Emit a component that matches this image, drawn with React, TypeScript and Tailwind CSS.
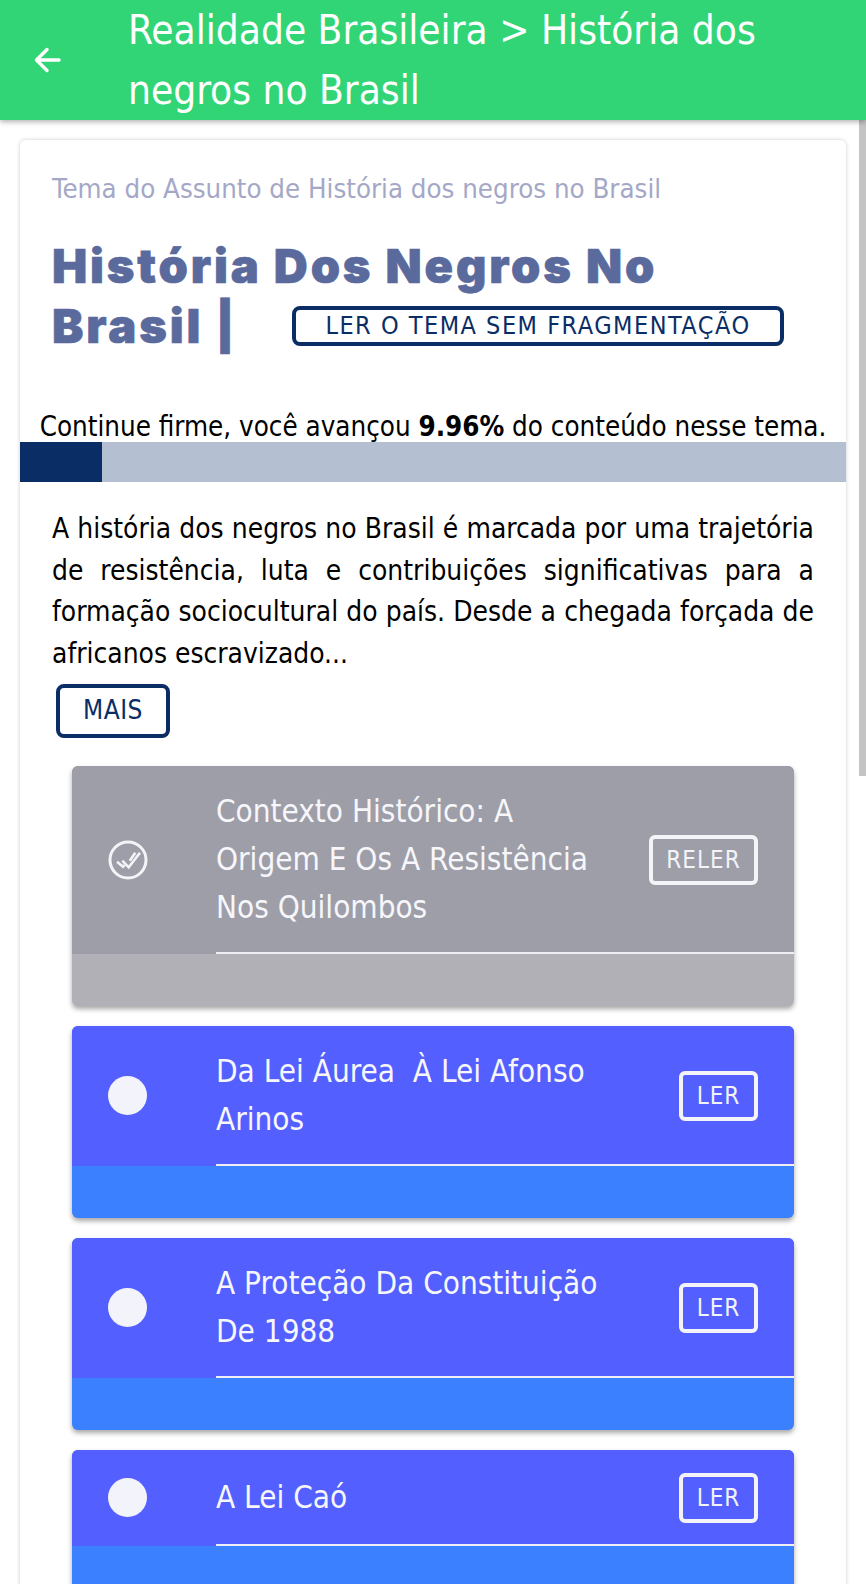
import React from "react";

const Card = ({ title, action, done, compact }: { title: React.ReactNode; action: string; done?: boolean; compact?: boolean }) => (
  <div className={`rounded-[6px] overflow-hidden shadow-[0_3px_5px_rgba(0,0,0,0.35)] ${done ? "bg-[#b0b0b6]" : "bg-[#3b80ff]"}`}>
    <div className={`flex items-center pr-[36px] ${done ? "bg-[#9e9ea8]" : "bg-[#5360ff]"} ${compact ? "h-[96px]" : "py-[21px]"}`}>
      <div className="w-[144px] shrink-0 pl-[36px]">
        {done ? (
          <svg className="block" width="40" height="40" viewBox="0 0 40 40" fill="none" stroke="#f3f3f8" strokeWidth="3">
            <circle cx="20" cy="20" r="18" />
            <path d="M9 21.7l6 5 1.5-1.6M14.3 20.7l6.4 6.6L32 12.7M21.7 20.7l5.6-8" strokeWidth="2.6" />
          </svg>
        ) : (
          <div className="w-[39px] h-[39px] rounded-full bg-[#f3f3fb]" />
        )}
      </div>
      <div className="flex-1 pb-[2px] text-[31.2px] leading-[48px] text-[#f6f6fb]">{title}</div>
      <div className={`h-[50px] flex items-center justify-center border-4 border-[#f3f3f8] rounded-[6px] text-[24px] tracking-[1px] text-[#f3f3f8] uppercase ${done ? "w-[109px]" : "w-[79px]"}`}>
        {action}
      </div>
    </div>
    <div className="h-[54px] relative">
      <div className="ml-[144px] h-[2px] bg-[#eeeef4] -mt-[2px] relative" />
    </div>
  </div>
);

export default function App() {
  return (
    <div className="h-[1584px] overflow-hidden bg-white text-black flex flex-col relative font-['DejaVu_Sans_Condensed','DejaVu_Sans',sans-serif]">
      <header className="h-[120px] shrink-0 bg-[#32d576] flex items-center text-white shadow-[0_2px_5px_rgba(0,0,0,0.3)] relative z-10">
        <div className="w-[128px] shrink-0 pl-[29px]">
          <svg width="36" height="36" viewBox="0 0 24 24" fill="none" stroke="white" strokeWidth="2.3" strokeLinecap="round" strokeLinejoin="round">
            <path d="M20 12H5M12 5l-7 7 7 7" />
          </svg>
        </div>
        <div className="text-[40.2px] leading-[60px]">Realidade Brasileira &gt; História dos<br />negros no Brasil</div>
      </header>
      <div className="absolute right-0 top-[120px] w-[7px] h-[656px] bg-[#c4c4c4]" />
      <main className="mx-[20px] mt-[20px] rounded-[6px] bg-white shadow-[0_0_4px_rgba(0,0,0,0.2)] flex-1">
        <div className="pt-[31px] px-[32px] text-[27.4px] leading-[36px] text-[#a4a8c6]">Tema do Assunto de História dos negros no Brasil</div>
        <div className="mt-[29px] px-[32px] text-[47px] leading-[60px] font-black tracking-[2.85px] text-[#5a6a9c] font-['Inter',sans-serif] [-webkit-text-stroke:0.7px_#5a6a9c]">
          <div>História Dos Negros No</div>
          <div className="flex items-center">
            <span className="w-[240px]">Brasil |</span>
            <span className="h-[40px] w-[492px] flex items-center justify-center border-4 border-[#0a2d66] rounded-[8px] text-[25px] font-normal tracking-[1.5px] text-[#0a2d66] font-['DejaVu_Sans_Condensed',sans-serif] [-webkit-text-stroke:0]">LER O TEMA SEM FRAGMENTAÇÃO</span>
          </div>
        </div>
        <div className="mt-[54px] text-center text-[27.5px] leading-[32px]">Continue firme, você avançou <b>9.96%</b> do conteúdo nesse tema.</div>
        <div className="h-[40px] bg-[#b5bfd2]"><div className="h-full w-[82px] bg-[#0a2d66]" /></div>
        <p className="mt-[26px] mx-[32px] text-[27.9px] leading-[41.7px] text-justify">
          A história dos negros no Brasil é marcada por uma trajetória de resistência, luta e contribuições significativas para a formação sociocultural do país. Desde a chegada forçada de africanos escravizado...
        </p>
        <div className="ml-[36px] mt-[9px] w-[114px] h-[54px] flex items-center justify-center border-4 border-[#0a2d66] rounded-[8px] text-[26px] tracking-[0.5px] text-[#0a2d66]">MAIS</div>
        <div className="mx-[52px] mt-[28px] flex flex-col gap-[20px]">
          <Card done title={<>Contexto Histórico: A<br />Origem E Os A Resistência<br />Nos Quilombos</>} action="Reler" />
          <Card title={<>Da Lei Áurea&nbsp;&nbsp;À Lei Afonso<br />Arinos</>} action="Ler" />
          <Card title={<>A Proteção Da Constituição<br />De 1988</>} action="Ler" />
          <Card compact title="A Lei Caó" action="Ler" />
        </div>
      </main>
    </div>
  );
}
